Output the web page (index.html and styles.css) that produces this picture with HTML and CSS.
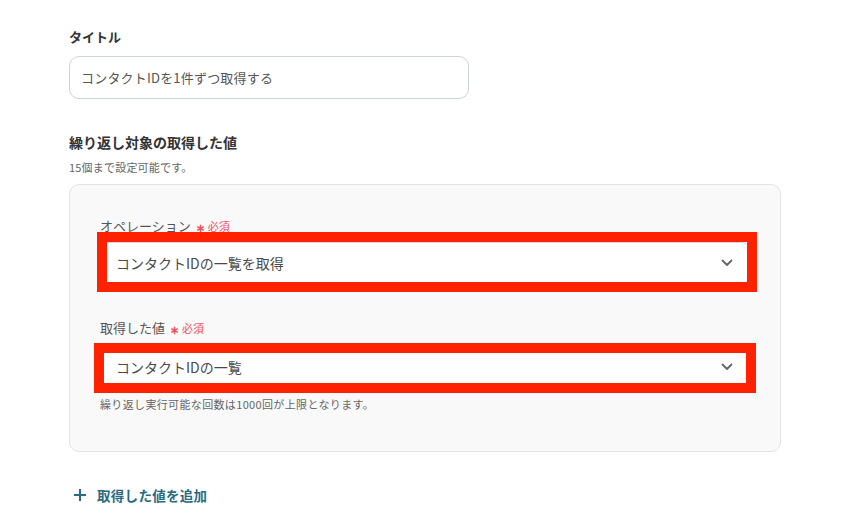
FILE: index.html
```html
<!DOCTYPE html>
<html lang="ja">
<head>
<meta charset="utf-8">
<link rel="stylesheet" href="styles.css">
</head>
<body>
<div class="page">
  <div class="heading heading-title">タイトル</div>
  <div class="text-input">コンタクトIDを1件ずつ取得する</div>

  <div class="heading heading-section">繰り返し対象の取得した値</div>
  <div class="hint">15個まで設定可能です。</div>

  <div class="panel">
    <div class="field-label">オペレーション<span class="req"><svg class="star" width="9" height="9" viewBox="0 0 10 10"><path d="M5 0.8 V9.2 M1.4 2.9 L8.6 7.1 M1.4 7.1 L8.6 2.9" stroke="#f0505a" stroke-width="1.6" fill="none"/></svg>必須</span></div>
    <div class="select select-first">
      <span class="select-text">コンタクトIDの一覧を取得</span>
      <svg class="chev" width="12" height="8" viewBox="0 0 12 8"><path d="M1.5 1.5 L6 6 L10.5 1.5" fill="none" stroke="#666" stroke-width="1.8" stroke-linecap="round" stroke-linejoin="round"/></svg>
      <div class="highlight hl-first"></div>
    </div>

    <div class="field-label field-label-second">取得した値<span class="req"><svg class="star" width="9" height="9" viewBox="0 0 10 10"><path d="M5 0.8 V9.2 M1.4 2.9 L8.6 7.1 M1.4 7.1 L8.6 2.9" stroke="#f0505a" stroke-width="1.6" fill="none"/></svg>必須</span></div>
    <div class="select select-second">
      <span class="select-text">コンタクトIDの一覧</span>
      <svg class="chev" width="12" height="8" viewBox="0 0 12 8"><path d="M1.5 1.5 L6 6 L10.5 1.5" fill="none" stroke="#666" stroke-width="1.8" stroke-linecap="round" stroke-linejoin="round"/></svg>
      <div class="highlight hl-second"></div>
    </div>
    <div class="helper">繰り返し実行可能な回数は1000回が上限となります。</div>
  </div>

  <div class="add">
    <svg class="plus" width="14" height="14" viewBox="0 0 14 14"><path d="M7 1 V13 M1 7 H13" stroke="#2b6b7e" stroke-width="2" fill="none"/></svg>
    <span>取得した値を追加</span>
  </div>
</div>
</body>
</html>
```

FILE: styles.css
```css
html, body {
  margin: 0;
  padding: 0;
  background: #ffffff;
}
body {
  font-family: "Noto Sans CJK JP", "Noto Sans", sans-serif;
  color: #333;
}
.page {
  padding: 27px 0 0 69px;
  width: 712px;
}
.heading {
  font-weight: 700;
  color: #333;
  line-height: 20px;
}
.heading-title {
  font-size: 13px;
}
.heading-section {
  font-size: 14px;
  margin-top: 33px;
}
.text-input {
  margin-top: 9px;
  height: 41px;
  border: 1px solid #cfd3da;
  border-radius: 10px;
  box-sizing: content-box;
  padding: 0 0 0 11px;
  width: 387px;
  font-size: 13px;
  letter-spacing: 0.2px;
  line-height: 41px;
  color: #555;
}
.hint {
  margin-top: 7px;
  font-size: 11px;
  letter-spacing: 0.2px;
  line-height: 16px;
  color: #666;
}
.panel {
  margin-top: 9px;
  height: 235px;
  border: 1px solid #e3e3e3;
  border-radius: 10px;
  background: #f9f9f9;
  padding: 31px 30px 0 30px;
  box-sizing: content-box;
  width: 650px;
}
.field-label {
  font-size: 13px;
  line-height: 20px;
  color: #555;
  display: flex;
  align-items: center;
}
.field-label-second {
  margin-top: 34px;
}
.req {
  display: inline-flex;
  align-items: center;
  color: #f0505a;
  font-size: 11px;
  margin-left: 5px;
}
.star {
  display: block;
  margin-right: 3px;
  position: relative;
  top: 2px;
}
.select {
  position: relative;
  height: 40px;
  background: #fff;
  border: 1px solid #cfd3da;
  border-radius: 8px;
  display: flex;
  align-items: center;
  justify-content: space-between;
  padding: 0 16px 0 15px;
}
.select-first {
  margin-top: 6px;
}
.select-second {
  margin-top: 8px;
}
.select-text {
  font-size: 14px;
  color: #4a4a4a;
}
.chev {
  display: block;
}
.highlight {
  position: absolute;
  border: 10px solid #ff2200;
  pointer-events: none;
}
.hl-first {
  left: -4px;
  right: -8px;
  top: -11px;
  bottom: -9px;
}
.hl-second {
  left: -7px;
  right: -7px;
  top: -4px;
  bottom: -6px;
}
.helper {
  margin-top: 8px;
  font-size: 11px;
  letter-spacing: 0.35px;
  line-height: 16px;
  color: #666;
}
.add {
  margin-top: 33px;
  display: flex;
  align-items: center;
  gap: 10px;
  padding-left: 4px;
  color: #2b6b7e;
  font-size: 13.5px;
  letter-spacing: 0.3px;
  font-weight: 700;
  line-height: 20px;
}
.plus {
  display: block;
}
```
